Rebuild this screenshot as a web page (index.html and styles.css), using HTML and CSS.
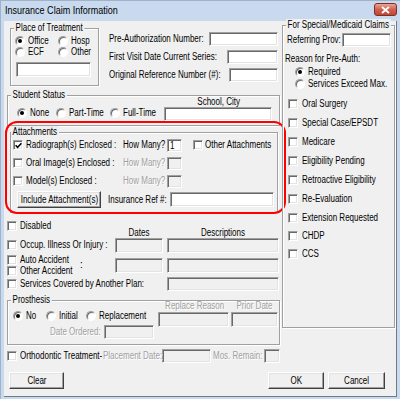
FILE: index.html
```html
<!DOCTYPE html>
<html lang="en">
<head>
    <meta charset="UTF-8">
    <title>Insurance Claim Information</title>
    <link rel="stylesheet" href="styles.css">
</head>
<body>
    <div class="window">
        <div class="titlebar">
            <span class="title">Insurance Claim Information</span>
            <span class="close">
                <svg width="9" height="8" viewBox="0 0 9 8"><path d="M1 1 L8 7 M8 1 L1 7" stroke="#fff" stroke-width="1.8"/></svg>
            </span>
        </div>
        <div class="client">
            <div class="main">
                <div class="col-left">
                    <div class="top-row">
                        <div class="group place">
                            <div class="legend t">Place of Treatment</div>
                            <div class="opt-row first">
                                <span class="opt"><i class="radio on"></i><span class="t">Office</span></span>
                                <span class="opt"><i class="radio"></i><span class="t">Hosp</span></span>
                            </div>
                            <div class="opt-row">
                                <span class="opt"><i class="radio"></i><span class="t">ECF</span></span>
                                <span class="opt"><i class="radio"></i><span class="t">Other</span></span>
                            </div>
                            <div class="tb place-tb"></div>
                        </div>
                        <div class="refs">
                            <div class="ref-row"><span class="t">Pre-Authorization Number:</span><span class="tb w69"></span></div>
                            <div class="ref-row"><span class="t">First Visit Date Current Series:</span><span class="tb w51"></span></div>
                            <div class="ref-row"><span class="t">Original Reference Number (#):</span><span class="tb w49"></span></div>
                        </div>
                    </div>

                    <div class="group student">
                        <div class="legend t">Student Status</div>
                        <div class="student-row">
                            <div class="opts">
                                <span class="opt"><i class="radio on"></i><span class="t">None</span></span>
                                <span class="opt"><i class="radio"></i><span class="t">Part-Time</span></span>
                                <span class="opt"><i class="radio"></i><span class="t">Full-Time</span></span>
                            </div>
                            <div class="school">
                                <span class="t c">School, City</span>
                                <span class="tb"></span>
                            </div>
                        </div>
                    </div>

                    <div class="group attach">
                        <div class="legend t">Attachments</div>
                        <div class="att-row">
                            <i class="cb"><svg width="7" height="7" viewBox="0 0 7 7"><path d="M0.6 3.2 L2.6 5.3 L6.4 1.2" fill="none" stroke="#000" stroke-width="1.5"/></svg></i>
                            <span class="att-label t">Radiograph(s) Enclosed :</span>
                            <span class="how t">How Many?</span>
                            <span class="tb count"><span class="t">1</span></span>
                            <i class="cb other"></i>
                            <span class="t">Other Attachments</span>
                        </div>
                        <div class="att-row">
                            <i class="cb"></i>
                            <span class="att-label t">Oral Image(s) Enclosed :</span>
                            <span class="how t dis">How Many?</span>
                            <span class="tb off count"></span>
                        </div>
                        <div class="att-row">
                            <i class="cb"></i>
                            <span class="att-label t">Model(s) Enclosed :</span>
                            <span class="how t dis">How Many?</span>
                            <span class="tb off count"></span>
                        </div>
                        <div class="att-row last">
                            <span class="btn include"><span class="t c">Include Attachment(s)</span></span>
                            <span class="ins-label t">Insurance Ref #:</span>
                            <span class="tb ins-ref"></span>
                        </div>
                    </div>

                    <div class="misc">
                        <div class="misc-left">
                            <div class="chk-row"><i class="cb"></i><span class="t">Disabled</span></div>
                            <div class="chk-row occ"><i class="cb"></i><span class="t">Occup. Illness Or Injury :</span></div>
                            <div class="acc">
                                <div class="acc-stack">
                                    <div class="chk-row"><i class="cb"></i><span class="t">Auto Accident</span></div>
                                    <div class="chk-row"><i class="cb"></i><span class="t">Other Accident</span></div>
                                </div>
                                <span class="acc-colon">:</span>
                            </div>
                        </div>
                        <div class="misc-right">
                            <div class="hdr-row"><span class="h-dates t c">Dates</span><span class="h-desc t c">Descriptions</span></div>
                            <div class="in-row"><span class="tb off w48"></span><span class="tb off w112"></span></div>
                            <div class="in-row"><span class="tb off w48"></span><span class="tb off w112"></span></div>
                        </div>
                    </div>
                    <div class="chk-row services">
                        <i class="cb"></i><span class="svc-label t">Services Covered by Another Plan:</span><span class="tb off w112"></span>
                    </div>

                    <div class="group pros">
                        <div class="legend t">Prosthesis</div>
                        <div class="pros-row">
                            <div class="pros-left">
                                <div class="opt-row">
                                    <span class="opt"><i class="radio on"></i><span class="t">No</span></span>
                                    <span class="opt"><i class="radio"></i><span class="t">Initial</span></span>
                                    <span class="opt"><i class="radio"></i><span class="t">Replacement</span></span>
                                </div>
                                <div class="date-ord">
                                    <span class="dis t ord-label">Date Ordered:</span>
                                    <span class="tb off w50"></span>
                                </div>
                            </div>
                            <div class="pros-right">
                                <div class="pros-hdr"><span class="dis t c w71">Replace Reason</span><span class="dis t c w47">Prior Date</span></div>
                                <div class="pros-in"><span class="tb off w71"></span><span class="tb off w47"></span></div>
                            </div>
                        </div>
                    </div>

                    <div class="chk-row ortho">
                        <i class="cb"></i>
                        <span class="ortho-label t">Orthodontic Treatment-</span>
                        <span class="dis t place-label">Placement Date:</span>
                        <span class="tb off w49"></span>
                        <span class="dis t mos-label">Mos. Remain:</span>
                        <span class="tb off w16"></span>
                    </div>
                </div>

                <div class="col-right">
                    <div class="group special">
                        <div class="legend t">For Special/Medicaid Claims</div>
                        <div class="prov-row"><span class="t prov-label">Referring Prov:</span><span class="tb w49"></span></div>
                        <div class="reason"><span class="t">Reason for Pre-Auth:</span></div>
                        <div class="opt-row reason-opt first"><span class="opt"><i class="radio on"></i><span class="t">Required</span></span></div>
                        <div class="opt-row reason-opt"><span class="opt"><i class="radio"></i><span class="t">Services Exceed Max.</span></span></div>
                        <div class="sp-chk first"><i class="cb"></i><span class="t">Oral Surgery</span></div>
                        <div class="sp-chk"><i class="cb"></i><span class="t">Special Case/EPSDT</span></div>
                        <div class="sp-chk"><i class="cb"></i><span class="t">Medicare</span></div>
                        <div class="sp-chk"><i class="cb"></i><span class="t">Eligibility Pending</span></div>
                        <div class="sp-chk"><i class="cb"></i><span class="t">Retroactive Eligibility</span></div>
                        <div class="sp-chk"><i class="cb"></i><span class="t">Re-Evaluation</span></div>
                        <div class="sp-chk"><i class="cb"></i><span class="t">Extension Requested</span></div>
                        <div class="sp-chk short"><i class="cb"></i><span class="t">CHDP</span></div>
                        <div class="sp-chk"><i class="cb"></i><span class="t">CCS</span></div>
                    </div>
                </div>
            </div>

            <div class="btn-row">
                <span class="btn clear"><span class="t c">Clear</span></span>
                <span class="btn ok"><span class="t c">OK</span></span>
                <span class="btn cancel"><span class="t c">Cancel</span></span>
            </div>
        </div>
    </div>
</body>
</html>
```
FILE: styles.css
```css
* {
    box-sizing: border-box;
}

body {
    margin: 0;
    font-family: "Liberation Sans", Arial, sans-serif;
    font-size: 10px;
    line-height: 12px;
    color: #000;
    white-space: nowrap;
}

i {
    font-style: normal;
}

/* the dialog font is a narrow bitmap face: squeeze Arial widths to match */
.t {
    display: inline-block;
    flex: none;
    transform: scaleX(0.8);
    transform-origin: 0 50%;
}

.t.c {
    transform-origin: 50% 50%;
}

.window {
    width: 400px;
    height: 399px;
    background: #c9daee;
    border-top: 1px solid #9fb2c9;
    border-left: 1px solid #9fb2c9;
    display: flex;
    flex-direction: column;
    overflow: hidden;
}

.titlebar {
    height: 20px;
    display: flex;
    align-items: flex-start;
    flex: none;
}

.title {
    font-size: 11px;
    line-height: 19px;
    margin-left: 4px;
    transform: scaleX(0.82);
    transform-origin: 0 50%;
}

.close {
    margin: 2px 3px 0 auto;
    width: 23px;
    height: 13px;
    border: 1px solid #7a3027;
    border-radius: 3px;
    background: linear-gradient(#e8a597, #d0604d 50%, #bf4733);
    display: flex;
    align-items: center;
    justify-content: center;
}

.client {
    margin-left: 3px;
    width: 393px;
    height: 376px;
    background: #f0f0f0;
    border-right: 1px solid #6d7a8a;
    border-bottom: 1px solid #6d7a8a;
    display: flex;
    flex-direction: column;
    flex: none;
}

.main {
    display: flex;
    align-items: flex-start;
}

.col-left {
    margin-left: 3px;
    width: 273px;
}

.col-right {
    margin-left: 2px;
    width: 113px;
}

/* group boxes */
.group {
    position: relative;
    border: 1px solid #a0a0a0;
    box-shadow: inset 1px 1px #fff, 1px 1px #fff;
}

.legend {
    display: table;
    background: #f0f0f0;
    padding: 0 2px;
    margin-top: -7px;
    line-height: 12px;
}

/* controls */
.tb {
    display: block;
    flex: none;
    background: #fff;
    border: 1px solid;
    border-color: #a0a0a0 #fff #fff #a0a0a0;
    box-shadow: inset 1px 1px #696969, inset -1px -1px #e3e3e3;
    height: 14px;
}

.tb.off {
    background: #f0f0f0;
}

.cb {
    width: 10px;
    height: 10px;
    flex: none;
    margin-right: 3px;
    background: #fff;
    border: 1px solid;
    border-color: #a0a0a0 #fff #fff #a0a0a0;
    box-shadow: inset 1px 1px #696969, inset -1px -1px #e3e3e3;
    display: flex;
    align-items: center;
    justify-content: center;
}

.radio {
    width: 10px;
    height: 10px;
    flex: none;
    margin-right: 3px;
    border-radius: 50%;
    background: #fff;
    border: 1px solid;
    border-color: #a0a0a0 #fff #fff #a0a0a0;
    box-shadow: inset 1px 1px #696969;
    display: flex;
    align-items: center;
    justify-content: center;
}

.radio.on::after {
    content: "";
    width: 4px;
    height: 4px;
    border-radius: 50%;
    background: #000;
}

.btn {
    display: flex;
    align-items: center;
    justify-content: center;
    flex: none;
    height: 17px;
    background: #f0f0f0;
    border: 1px solid;
    border-color: #fff #404040 #404040 #fff;
    box-shadow: inset -1px -1px #a0a0a0, inset 1px 1px #e3e3e3;
}

.dis {
    color: #a0a0a0;
    text-shadow: 1px 1px 0 #fff;
}

.opt-row {
    display: flex;
    align-items: center;
}

.opt {
    display: flex;
    align-items: center;
}

.chk-row {
    display: flex;
    align-items: center;
    height: 12px;
}

.w16 { width: 16px; }
.w47 { width: 47px; }
.w48 { width: 48px; }
.w49 { width: 49px; }
.w50 { width: 50px; }
.w51 { width: 51px; }
.w69 { width: 69px; }
.w71 { width: 71px; }
.w112 { width: 112px; }

/* place of treatment */
.top-row {
    display: flex;
    align-items: flex-start;
}

.place {
    margin: 7px 0 0 3px;
    width: 89px;
    height: 58px;
}

.place .legend {
    margin-left: 3px;
}

.place .opt-row {
    height: 11px;
    padding-left: 4px;
}

.place .opt-row.first {
    margin-top: 1px;
}

.place .opt:first-child {
    width: 43px;
}

.place-tb {
    margin: 5px 0 0 5px;
    width: 75px;
    height: 15px;
}

.refs {
    margin-left: 10px;
    width: 169px;
}

.ref-row {
    display: flex;
    align-items: center;
    height: 14px;
    margin-top: 4px;
}

.ref-row:first-child {
    margin-top: 11px;
}

.ref-row .t {
    width: 95px;
}

.ref-row .tb {
    margin-left: auto;
}

/* student status */
.student {
    margin-top: 9px;
    padding-bottom: 4px;
}

.student .legend {
    margin-left: 3px;
    margin-bottom: -5px;
}

.student-row {
    display: flex;
    align-items: flex-end;
}

.student .opts {
    display: flex;
    align-items: center;
    height: 12px;
    margin-bottom: 2px;
    padding-left: 9px;
}

.student .opt:nth-child(1) { width: 39px; }
.student .opt:nth-child(2) { width: 54px; }

.school {
    margin: 0 7px 0 auto;
    width: 108px;
    display: flex;
    flex-direction: column;
    align-items: center;
    line-height: 11px;
}

.school .tb {
    width: 108px;
}

/* attachments */
.attach {
    margin: 6px 0 0 3px;
    width: 268px;
    padding-bottom: 3px;
}

.attach::after {
    content: "";
    position: absolute;
    left: -6px;
    top: -12px;
    right: -9px;
    bottom: -2px;
    border: 2px solid #f00;
    border-radius: 12px;
    pointer-events: none;
}

.attach .legend {
    margin-bottom: -2px;
}

.att-row {
    display: flex;
    align-items: center;
    height: 18px;
    padding-left: 2px;
}

.att-row.last {
    height: 19px;
}

.att-label {
    width: 97px;
}

.how {
    width: 44px;
}

.count {
    width: 15px;
    height: 13px;
    padding-left: 2px;
    line-height: 11px;
}

.cb.other {
    margin: 0 2px 0 11px;
}

.include {
    margin-left: 4px;
    width: 84px;
}

.ins-label {
    margin-left: 7px;
    width: 62px;
}

.ins-ref {
    width: 104px;
    height: 15px;
}

/* accident rows */
.misc {
    display: flex;
    margin-top: 7px;
}

.misc-left {
    width: 108px;
}

.occ {
    margin-top: 7px;
}

.acc {
    display: flex;
    margin-top: 3px;
}

.acc-stack {
    width: 73px;
}

.acc-stack .chk-row {
    height: 11px;
}

.acc-colon {
    align-self: center;
}

.misc-right {
    width: 164px;
}

.hdr-row {
    display: flex;
    margin-top: 7px;
    height: 11px;
    line-height: 11px;
}

.h-dates {
    width: 48px;
    margin-right: 4px;
    text-align: center;
}

.h-desc {
    width: 112px;
    text-align: center;
}

.in-row {
    display: flex;
    gap: 4px;
}

.in-row .tb {
    height: 15px;
}

.in-row + .in-row {
    margin-top: 5px;
}

.services {
    margin-top: 1px;
    height: 14px;
}

.svc-label {
    width: 147px;
}

/* prosthesis */
.pros {
    margin-top: 9px;
    padding-bottom: 5px;
}

.pros .legend {
    margin-left: 3px;
    margin-bottom: -6px;
}

.pros-row {
    display: flex;
}

.pros-left {
    width: 150px;
}

.pros-left .opt-row {
    margin-top: 10px;
    height: 12px;
    padding-left: 5px;
}

.pros-left .opt:nth-child(1) { width: 37px; }
.pros-left .opt:nth-child(2) { width: 45px; }

.date-ord {
    display: flex;
    align-items: center;
    height: 14px;
    margin: 3px 0 0 42px;
}

.ord-label {
    width: 54px;
}

.pros-right {
    width: 120px;
}

.pros-hdr {
    display: flex;
    gap: 2px;
    height: 12px;
}

.pros-hdr span {
    text-align: center;
}

.pros-in {
    display: flex;
    gap: 2px;
}

.pros-in .tb {
    height: 15px;
}

/* orthodontic */
.ortho {
    margin-top: 4px;
    height: 14px;
}

.ortho-label {
    width: 83px;
}

.place-label {
    width: 59px;
}

.mos-label {
    margin-left: 2px;
    width: 51px;
}

/* special / medicaid */
.special {
    margin-top: 4px;
    height: 303px;
}

.special .legend {
    margin-left: 3px;
}

.prov-row {
    display: flex;
    align-items: center;
    height: 14px;
    margin-top: 2px;
    padding-left: 4px;
}

.prov-label {
    width: 55px;
}

.prov-row .tb {
    margin: 0 3px 0 auto;
}

.reason {
    margin-top: 6px;
    height: 12px;
    padding-left: 2px;
}

.reason-opt {
    height: 12px;
    padding-left: 12px;
}

.reason-opt.first {
    margin-top: 1px;
}

.sp-chk {
    display: flex;
    align-items: center;
    height: 19px;
    padding-left: 5px;
}

.sp-chk .cb {
    margin-right: 4px;
}

.sp-chk.first {
    margin-top: 4px;
}

.sp-chk.short {
    height: 17px;
}

/* buttons */
.btn-row {
    display: flex;
    margin-top: 9px;
    padding: 0 11px 0 5px;
}

.clear {
    width: 55px;
}

.ok {
    margin-left: auto;
    width: 56px;
}

.cancel {
    margin-left: 4px;
    width: 57px;
}
```
